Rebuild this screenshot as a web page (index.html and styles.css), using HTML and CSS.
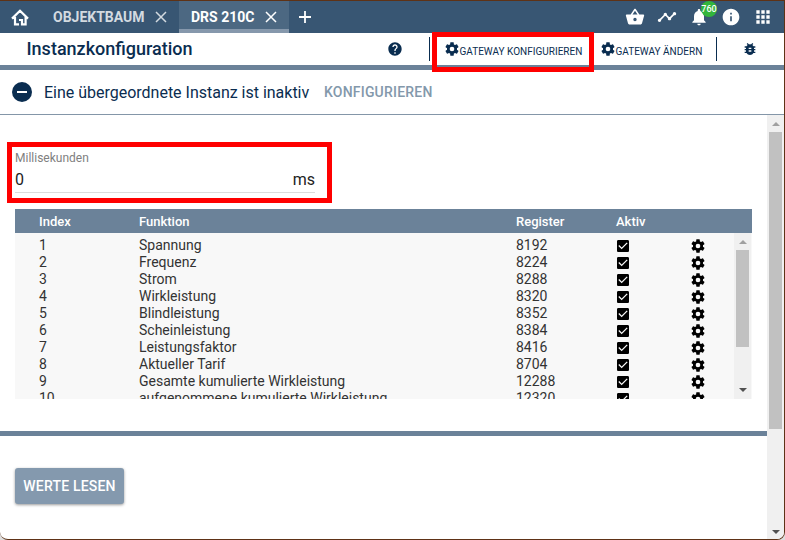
FILE: index.html
```html
<!DOCTYPE html>
<html lang="de">
<head>
<meta charset="utf-8">
<title>Instanzkonfiguration</title>
<link rel="stylesheet" href="styles.css">
</head>
<body>
<svg class="defs" aria-hidden="true">
  <symbol id="cog" viewBox="0 0 24 24"><path d="M12,15.5A3.5,3.5 0 0,1 8.5,12A3.5,3.5 0 0,1 12,8.5A3.5,3.5 0 0,1 15.5,12A3.5,3.5 0 0,1 12,15.5M19.43,12.97C19.47,12.65 19.5,12.33 19.5,12C19.5,11.67 19.47,11.34 19.43,11L21.54,9.37C21.73,9.22 21.78,8.95 21.66,8.73L19.66,5.27C19.54,5.05 19.27,4.96 19.05,5.05L16.56,6.05C16.04,5.66 15.5,5.32 14.87,5.07L14.5,2.42C14.46,2.18 14.25,2 14,2H10C9.75,2 9.54,2.18 9.5,2.42L9.13,5.07C8.5,5.32 7.96,5.66 7.44,6.05L4.95,5.05C4.73,4.96 4.46,5.05 4.34,5.27L2.34,8.73C2.21,8.95 2.27,9.22 2.46,9.37L4.57,11C4.53,11.34 4.5,11.67 4.5,12C4.5,12.33 4.53,12.65 4.57,12.97L2.46,14.63C2.27,14.78 2.21,15.05 2.34,15.27L4.34,18.73C4.46,18.95 4.73,19.03 4.95,18.95L7.44,17.94C7.96,18.34 8.5,18.68 9.13,18.93L9.5,21.58C9.54,21.82 9.75,22 10,22H14C14.25,22 14.46,21.82 14.5,21.58L14.87,18.93C15.5,18.67 16.04,18.34 16.56,17.94L19.05,18.95C19.27,19.03 19.54,18.95 19.66,18.73L21.66,15.27C21.78,15.05 21.73,14.78 21.54,14.63L19.43,12.97Z"/></symbol>
  <symbol id="check" viewBox="0 0 24 24"><path d="M19 3H5c-1.11 0-2 .9-2 2v14c0 1.1.89 2 2 2h14c1.11 0 2-.9 2-2V5c0-1.1-.89-2-2-2zm-9 14l-5-5 1.41-1.41L10 14.17l7.59-7.59L19 8l-9 9z"/></symbol>
  <symbol id="close" viewBox="0 0 12 12"><path d="M1 1L11 11M11 1L1 11" fill="none" stroke="currentColor" stroke-width="1.5"/></symbol>
</svg>
<div class="window">
  <header class="topbar">
    <a class="home"><svg viewBox="0 0 18 17"><path d="M1 9.6L9 1.7 17 9.6M4 8V15.4H8M14.6 8V15.4H11V11H8" fill="none" stroke="currentColor" stroke-width="2.2"/></svg></a>
    <div class="tab"><span class="tab-name">OBJEKTBAUM</span><svg class="close"><use href="#close"/></svg></div>
    <div class="tab active"><span class="tab-name">DRS 210C</span><svg class="close"><use href="#close"/></svg></div>
    <svg class="plus" viewBox="0 0 12 12"><path d="M6 0V12M0 6H12" fill="none" stroke="currentColor" stroke-width="1.8"/></svg>
    <nav class="tools">
      <svg class="i20" viewBox="0 0 24 24"><path d="M17.21 9l-4.38-6.56c-.19-.28-.51-.42-.83-.42-.32 0-.64.14-.83.43L6.79 9H2c-.55 0-1 .45-1 1 0 .09.01.18.04.27l2.54 9.27c.23.84 1 1.46 1.92 1.46h13c.92 0 1.69-.62 1.93-1.46l2.54-9.27L23 10c0-.55-.45-1-1-1h-4.79zM9 9l3-4.4L15 9H9zm3 8c-1.1 0-2-.9-2-2s.9-2 2-2 2 .9 2 2-.9 2-2 2z"/></svg>
      <svg class="i20" viewBox="0 0 24 24"><path d="M23 8c0 1.1-.9 2-2 2-.18 0-.35-.02-.51-.07l-3.56 3.55c.05.16.07.34.07.52 0 1.1-.9 2-2 2s-2-.9-2-2c0-.18.02-.36.07-.52l-2.55-2.55c-.16.05-.34.07-.52.07s-.36-.02-.52-.07l-4.55 4.56c.05.16.07.33.07.51 0 1.1-.9 2-2 2s-2-.9-2-2 .9-2 2-2c.18 0 .35.02.51.07l4.56-4.55C8.02 9.36 8 9.18 8 9c0-1.1.9-2 2-2s2 .9 2 2c0 .18-.02.36-.07.52l2.55 2.55c.16-.05.34-.07.52-.07s.36.02.52.07l3.55-3.56C19.02 8.35 19 8.18 19 8c0-1.1.9-2 2-2s2 .9 2 2z"/></svg>
      <div class="bell"><svg class="i20" viewBox="0 0 24 24"><path d="M12 22c1.1 0 2-.9 2-2h-4c0 1.1.89 2 2 2zm6-6v-5c0-3.07-1.64-5.64-4.5-6.32V4c0-.83-.67-1.5-1.5-1.5s-1.5.67-1.5 1.5v.68C7.63 5.36 6 7.92 6 11v5l-2 2v1h16v-1l-2-2z"/></svg><span class="badge">760</span></div>
      <svg class="i20" viewBox="0 0 24 24"><path d="M12 2C6.48 2 2 6.48 2 12s4.48 10 10 10 10-4.48 10-10S17.52 2 12 2zm1 15h-2v-6h2v6zm0-8h-2V7h2v2z"/></svg>
      <svg class="i20" viewBox="0 0 24 24"><path d="M4 4h4v4H4zM10 4h4v4h-4zM16 4h4v4h-4zM4 10h4v4H4zM10 10h4v4h-4zM16 10h4v4h-4zM4 16h4v4H4zM10 16h4v4h-4zM16 16h4v4h-4z"/></svg>
    </nav>
  </header>

  <div class="titlebar">
    <h1>Instanzkonfiguration</h1>
    <svg class="i16 help" viewBox="0 0 24 24"><path d="M12 2C6.48 2 2 6.48 2 12s4.48 10 10 10 10-4.48 10-10S17.52 2 12 2zm1 17h-2v-2h2v2zm2.07-7.75l-.9.92C13.45 12.9 13 13.5 13 15h-2v-.5c0-1.1.45-2.1 1.17-2.83l1.24-1.26c.37-.36.59-.86.59-1.41 0-1.1-.9-2-2-2s-2 .9-2 2H8c0-2.21 1.79-4 4-4s4 1.79 4 4c0 .88-.36 1.68-.93 2.25z"/></svg>
    <i class="divider"></i>
    <a class="action first"><svg class="i16"><use href="#cog"/></svg><span>GATEWAY KONFIGURIEREN</span><b class="mark mark-action"></b></a>
    <a class="action second"><svg class="i16"><use href="#cog"/></svg><span>GATEWAY ÄNDERN</span></a>
    <i class="divider"></i>
    <svg class="i16 bug" viewBox="0 0 24 24"><path d="M20 8h-2.81c-.45-.78-1.07-1.45-1.82-1.96L17 4.41 15.59 3l-2.17 2.17C12.96 5.06 12.49 5 12 5c-.49 0-.96.06-1.41.17L8.41 3 7 4.41l1.62 1.63C7.88 6.55 7.26 7.22 6.81 8H4v2h2.09c-.05.33-.09.66-.09 1v1H4v2h2v1c0 .34.04.67.09 1H4v2h2.81c1.04 1.79 2.97 3 5.19 3s4.15-1.21 5.19-3H20v-2h-2.09c.05-.33.09-.66.09-1v-1h2v-2h-2v-1c0-.34-.04-.67-.09-1H20V8zm-6 8h-4v-2h4v2zm0-4h-4v-2h4v2z"/></svg>
  </div>

  <div class="notice">
    <i class="minus"></i>
    <span class="notice-text">Eine übergeordnete Instanz ist inaktiv</span>
    <a class="configure">KONFIGURIEREN</a>
  </div>

  <div class="main">
    <div class="content">
      <section class="settings">
        <div class="field">
          <label>Millisekunden</label>
          <div class="value"><span>0</span><span>ms</span></div>
          <b class="mark mark-field"></b>
        </div>
        <div class="table">
          <div class="row head"><span>Index</span><span>Funktion</span><span>Register</span><span>Aktiv</span></div>
          <div class="body">
            <div class="rows">
              <div class="row"><span>1</span><span>Spannung</span><span>8192</span><svg class="i16"><use href="#check"/></svg><svg class="i16"><use href="#cog"/></svg></div>
              <div class="row"><span>2</span><span>Frequenz</span><span>8224</span><svg class="i16"><use href="#check"/></svg><svg class="i16"><use href="#cog"/></svg></div>
              <div class="row"><span>3</span><span>Strom</span><span>8288</span><svg class="i16"><use href="#check"/></svg><svg class="i16"><use href="#cog"/></svg></div>
              <div class="row"><span>4</span><span>Wirkleistung</span><span>8320</span><svg class="i16"><use href="#check"/></svg><svg class="i16"><use href="#cog"/></svg></div>
              <div class="row"><span>5</span><span>Blindleistung</span><span>8352</span><svg class="i16"><use href="#check"/></svg><svg class="i16"><use href="#cog"/></svg></div>
              <div class="row"><span>6</span><span>Scheinleistung</span><span>8384</span><svg class="i16"><use href="#check"/></svg><svg class="i16"><use href="#cog"/></svg></div>
              <div class="row"><span>7</span><span>Leistungsfaktor</span><span>8416</span><svg class="i16"><use href="#check"/></svg><svg class="i16"><use href="#cog"/></svg></div>
              <div class="row"><span>8</span><span>Aktueller Tarif</span><span>8704</span><svg class="i16"><use href="#check"/></svg><svg class="i16"><use href="#cog"/></svg></div>
              <div class="row"><span>9</span><span>Gesamte kumulierte Wirkleistung</span><span>12288</span><svg class="i16"><use href="#check"/></svg><svg class="i16"><use href="#cog"/></svg></div>
              <div class="row"><span>10</span><span>aufgenommene kumulierte Wirkleistung</span><span>12320</span><svg class="i16"><use href="#check"/></svg><svg class="i16"><use href="#cog"/></svg></div>
            </div>
            <div class="scroll inner"><i class="up"></i><i class="thumb"></i><i class="down"></i></div>
          </div>
        </div>
      </section>
      <section class="footer"><button>WERTE LESEN</button></section>
    </div>
    <div class="scroll outer"><i class="up"></i><i class="thumb"></i><i class="down"></i></div>
  </div>
</div>
</body>
</html>
```
FILE: styles.css
```css
* { box-sizing: border-box; }
body { margin: 0; height: 540px; overflow: hidden; background: #ddd; font-family: Roboto, sans-serif; color: #0a2d50; }
.defs { display: none; }
svg { display: block; fill: currentColor; flex: none; }
.i16 { width: 16px; height: 16px; }
.i20 { width: 20px; height: 20px; }

.window { display: flex; flex-direction: column; height: 540px; border: 1px solid #5e3216; border-left: 0; border-radius: 0 0 8px 8px; overflow: hidden; background: #fff; }

.topbar { display: flex; align-items: center; height: 32px; flex: none; background: #385673; color: #fff; }
.home { width: 41px; padding-left: 11px; }
.home svg { width: 18px; height: 17px; }
.tab { display: flex; align-items: center; justify-content: space-between; width: 138px; height: 32px; padding: 0 12px; font-size: 14px; font-weight: 700; color: #d3dae0; }
.tab.active { width: 110px; background: #4c6882; border-bottom: 4px solid #8698ac; padding-top: 4px; color: #fff; }
.close { width: 12px; height: 12px; }
.plus { width: 12px; height: 12px; margin-left: 10px; }
.tools { display: flex; margin-left: auto; margin-right: 11px; gap: 12px; }
.bell { position: relative; }
.badge { position: absolute; left: 12px; top: -6px; width: 16px; height: 16px; border-radius: 50%; background: #32b53c; font-size: 9px; font-weight: 500; line-height: 16px; text-align: center; }

.titlebar { display: flex; align-items: center; height: 37px; flex: none; border-bottom: 5px solid #6b8299; }
h1 { margin: 0; width: 387px; padding-left: 26.5px; font-size: 18px; font-weight: 500; line-height: 32px; }
.help { margin-right: 26px; }
.divider { width: 1px; height: 24px; background: #0a2d50; }
.action { position: relative; display: flex; align-items: center; font-size: 10px; }
.action span { padding-top: 5px; margin-left: -.5px; }
.first { width: 156px; margin-left: 14px; }
.second { width: 116px; }
.bug { margin-left: 25px; }
.mark { position: absolute; border: 5px solid #f00; z-index: 2; }
.mark-action { left: -12px; top: -9px; width: 162px; height: 40px; }

.notice { display: flex; align-items: center; height: 45px; flex: none; border-bottom: 1px solid #8496a8; }
.minus { display: grid; place-items: center; width: 20px; height: 20px; margin: 0 12px; border-radius: 50%; background: #0a2d50; }
.minus::before { content: ""; width: 10px; height: 2px; background: #fff; }
.notice-text { width: 280px; padding-top: 1px; font-size: 16px; letter-spacing: -.01px; white-space: nowrap; }
.configure { font-size: 14px; font-weight: 500; letter-spacing: .2px; color: #8398ab; }

.main { display: flex; flex: 1; min-height: 0; }
.content { width: 767px; }
.settings { height: 321px; padding: 36px 15px 0; border-bottom: 5px solid #6b8299; }
.field { position: relative; width: 300px; height: 42px; border-bottom: 1px solid #dcdcdc; }
.field label { display: block; font-size: 12px; line-height: 14px; color: #808080; }
.value { display: flex; justify-content: space-between; padding-top: 5px; font-size: 16px; line-height: 20px; color: #222; }
.mark-field { left: -8px; top: -9px; width: 325px; height: 61px; }
.table { width: 737px; margin-top: 16px; font-size: 14px; color: #333; }
.row { display: grid; grid-template-columns: 100px 377px 99px 75px 16px; align-items: center; height: 17px; padding-left: 24px; line-height: 17px; }
.row svg { color: #000; margin-top: 1px; }
.row.head { height: 24px; background: #6b8299; color: #fff; font-size: 13px; font-weight: 500; }
.row.head span:last-child { padding-left: 1px; }
.body { display: flex; height: 166px; background: #f8f8f8; overflow: hidden; }
.rows { width: 719px; padding-top: 4px; }

.scroll { display: flex; flex-direction: column; align-items: center; width: 17px; background: #f0f0f0; flex: none; }
.up, .down { border: 4px solid transparent; }
.up { border-top: 0; border-bottom-color: #a0a0a0; }
.down { border-bottom: 0; border-top-color: #505050; margin-top: auto; }
.thumb { width: 13px; background: #c1c1c1; }
.inner { padding: 7px 0; }
.inner .thumb { height: 97px; margin-top: 6px; }
.outer { padding: 7px 0 5px; }
.outer .thumb { height: 297px; margin-top: 6px; }

.footer { padding: 32px 15px; }
button { width: 109px; height: 36px; padding: 0; border: 0; border-radius: 3px; background: #8499ae; box-shadow: 0 1px 3px rgba(0,0,0,.4); color: #fff; font: 500 14px Roboto, sans-serif; letter-spacing: .2px; }
```
